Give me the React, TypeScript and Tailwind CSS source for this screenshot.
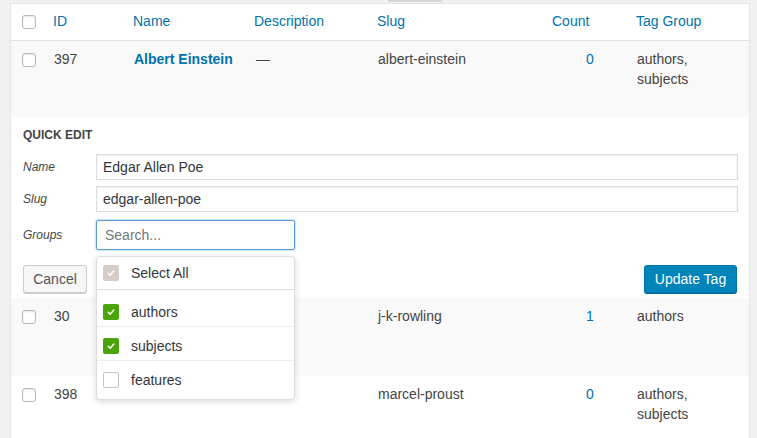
import React from "react";

const cols = "grid grid-cols-[42px_80px_121px_123px_174px_85px_1fr]";

function Box() {
  return (
    <div className="mt-[4px] ml-[11px] h-[14px] w-[14px] rounded-[3px] border border-[#b4b9be] bg-white shadow-[inset_0_1px_2px_rgba(0,0,0,0.1)]" />
  );
}

function Check({ kind }: { kind: "gray" | "green" | "off" }) {
  if (kind === "off") {
    return <div className="h-[16px] w-[16px] shrink-0 rounded-[2px] border border-[#cbc3bb] bg-white" />;
  }
  return (
    <div
      className={
        "flex h-[16px] w-[16px] shrink-0 items-center justify-center rounded-[2px] " +
        (kind === "gray" ? "bg-[#d5cec7]" : "bg-[#4ca40c]")
      }
    >
      <svg width="10" height="10" viewBox="0 0 10 10" fill="none">
        <polyline points="2.2,5.3 4.2,7.2 7.8,3" stroke="white" strokeWidth="1.4" strokeLinecap="round" strokeLinejoin="round" />
      </svg>
    </div>
  );
}

function Row({
  id,
  name,
  desc,
  slug,
  count,
  groups,
  bg,
  h,
}: {
  id: string;
  name: string;
  desc: string;
  slug: string;
  count: string;
  groups: string[];
  bg: string;
  h: string;
}) {
  return (
    <div className={`${cols} ${bg} ${h} text-[14px] leading-5 text-[#444]`}>
      <div className="pt-[8px]">
        <Box />
      </div>
      <div className="pt-[8px] pl-[1px]">{id}</div>
      <div className="pt-[8px] pl-[1px] font-bold text-[#0073aa]">{name}</div>
      <div className="pt-[8px] pl-[2px]">{desc}</div>
      <div className="pt-[8px] pl-[1px]">{slug}</div>
      <div className="pt-[8px] pl-[35px] text-[#0073aa]">{count}</div>
      <div className="pt-[8px] pl-[1px]">
        {groups.map((g) => (
          <div key={g}>{g}</div>
        ))}
      </div>
    </div>
  );
}

export default function App() {
  return (
    <div className="min-h-screen overflow-hidden bg-[#f1f1f1] font-['Liberation_Sans',Arial,sans-serif]">
      <div className="ml-[388px] h-[2px] w-[54px] bg-[#dcd9d5]" />
      <div className="ml-[10px] mt-[1px] w-[740px] border border-[#e5e5e5] bg-white">
        {/* header */}
        <div className={`${cols} h-[37px] border-b border-[#e1e1e1] text-[14px] leading-5 text-[#0073aa]`}>
          <div className="pt-[7px]">
            <Box />
          </div>
          <div className="pt-[7px]">ID</div>
          <div className="pt-[7px]">Name</div>
          <div className="pt-[7px]">Description</div>
          <div className="pt-[7px]">Slug</div>
          <div className="pt-[7px] pl-[1px]">Count</div>
          <div className="pt-[7px]">Tag Group</div>
        </div>

        <Row id="397" name="Albert Einstein" desc="—" slug="albert-einstein" count="0" groups={["authors,", "subjects"]} bg="bg-[#f9f9f9]" h="h-[76px]" />

        {/* quick edit */}
        <div className="relative z-10 h-[181px] bg-white pt-[10px]">
          <div className="pl-[12px] text-[12px] font-bold leading-4 text-[#444]">QUICK EDIT</div>
          <div className="mt-[11px] flex flex-col pl-[12px] pr-[11px]">
            <div className="flex h-[26px] items-center">
              <div className="w-[73px] text-[12px] italic text-[#444]">Name</div>
              <div className="flex h-[26px] flex-1 items-center border border-[#ddd] px-[6px] text-[14px] text-[#32373c] shadow-[inset_0_1px_2px_rgba(0,0,0,0.07)]">
                Edgar Allen Poe
              </div>
            </div>
            <div className="mt-[6px] flex h-[26px] items-center">
              <div className="w-[73px] text-[12px] italic text-[#444]">Slug</div>
              <div className="flex h-[26px] flex-1 items-center border border-[#ddd] px-[6px] text-[14px] text-[#32373c] shadow-[inset_0_1px_2px_rgba(0,0,0,0.07)]">
                edgar-allen-poe
              </div>
            </div>
            <div className="mt-[8px] flex h-[30px] items-center">
              <div className="w-[73px] text-[12px] italic text-[#444]">Groups</div>
              <div className="relative">
                <div className="flex h-[30px] w-[199px] items-center rounded-[2px] border border-[#5b9dd9] px-[8px] text-[14px] text-[#72777c] shadow-[0_0_2px_rgba(30,140,190,0.8)]">
                  Search...
                </div>
                <div className="absolute left-0 top-[36px] w-[199px] rounded-[4px] border border-[#ddd] bg-white text-[14px] leading-4 text-[#32373c] shadow-[0_2px_6px_rgba(0,0,0,0.15)]">
                  <div className="flex items-center gap-[12px] border-b border-[#ddd] px-[6px] py-[8px]">
                    <Check kind="gray" />
                    <span>Select All</span>
                  </div>
                  <div className="pt-[3px]">
                    <div className="flex items-center gap-[12px] border-b border-[#eee] px-[6px] pt-[11px] pb-[6px]">
                      <Check kind="green" />
                      <span>authors</span>
                    </div>
                    <div className="flex items-center gap-[12px] border-b border-[#eee] px-[6px] pt-[11px] pb-[6px]">
                      <Check kind="green" />
                      <span>subjects</span>
                    </div>
                    <div className="flex items-center gap-[12px] px-[6px] pt-[11px] pb-[11px]">
                      <Check kind="off" />
                      <span>features</span>
                    </div>
                  </div>
                </div>
              </div>
            </div>
          </div>
          <div className="mt-[15px] flex items-center justify-between pl-[12px] pr-[12px]">
            <div className="flex h-[28px] w-[64px] items-center justify-center rounded-[3px] border border-[#ccc] bg-[#f7f7f7] text-[14px] text-[#555] shadow-[0_1px_0_#ccc]">
              Cancel
            </div>
            <div className="flex h-[28px] w-[93px] items-center justify-center rounded-[3px] border border-[#0073aa] bg-[#0085ba] text-[14px] text-white shadow-[0_1px_0_#006799]">
              Update Tag
            </div>
          </div>
        </div>

        <Row id="30" name="" desc="" slug="j-k-rowling" count="1" groups={["authors"]} bg="bg-[#f9f9f9]" h="h-[78px]" />
        <Row id="398" name="" desc="" slug="marcel-proust" count="0" groups={["authors,", "subjects"]} bg="bg-white" h="h-[76px]" />
      </div>
    </div>
  );
}
